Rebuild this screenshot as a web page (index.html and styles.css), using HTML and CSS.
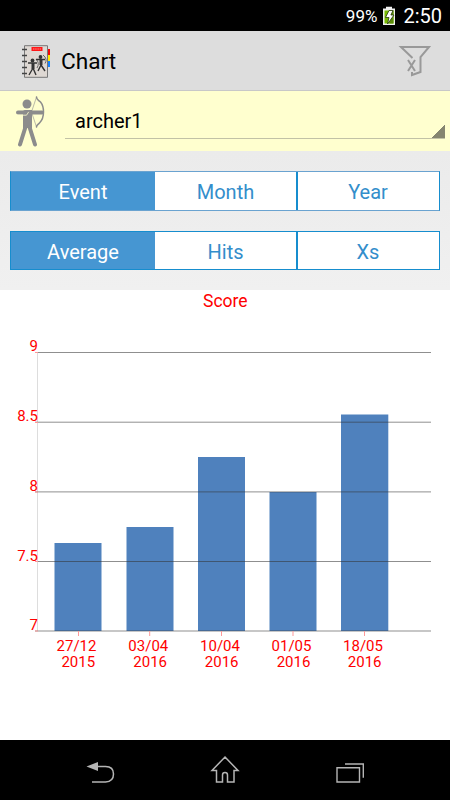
FILE: index.html
```html
<!DOCTYPE html>
<html lang="en">
<head>
<meta charset="utf-8">
<title>Chart</title>
<link rel="stylesheet" href="styles.css">
</head>
<body>
<div class="status">
  <span class="percent">99%</span>
  <svg class="battery" width="14" height="20" viewBox="0 0 14 20"><path d="M1 2.500h3V.7h6v1.800h3V19H1z" fill="#f2f2f2"/><path d="M2.500 4.500h9v13h-9z" fill="#76b900"/><path d="M7.500 4.500h4v13h-4z" fill="#5b8c08"/><path d="M7 4.500h4L8.900 9H12l-6.500 9 1.500-6.500H3.500z" fill="#fff" stroke="#26380a" stroke-width=".8"/></svg>
  <span class="clock">2:50</span>
</div>
<header class="bar">
  <svg class="app-icon" width="30" height="34" viewBox="0 0 30 34">
    <path d="M26 4h3v6h-3z" fill="#f00808"/><path d="M26 10h3v6h-3z" fill="#ffe800"/><path d="M26 16h3v6h-3z" fill="#1683ff"/>
    <path d="M3.500.7h23v31.600h-23z" fill="#ded8d3" stroke="#777" stroke-width="1"/>
    <path d="M10.500 2h11v4h-11z" fill="#ff1717"/><path d="M12 4h8" stroke="#ff8b8b" stroke-width="1" stroke-dasharray="1.500 .7"/>
    <path d="M1 4.500h5M1 10.500h5M1 16.500h5M1 22.500h5M1 28.500h5" stroke="#444" stroke-width="1.500"/>
    <g fill="none" stroke="#333" stroke-width="1.400">
      <path d="M7 18h9M12 18v6M12 23l-4 7M12 23l3 7"/><path d="M15 14q4 4 1 9" stroke-width=".7"/>
      <path d="M15 14.500h9M20 14.500v6M20 20l-3 6M20 20l4 6"/><path d="M22 10q5 4 2 8.500" stroke-width=".7"/>
      <path d="M12 18v6M20 14v6" stroke-width="3"/>
    </g>
    <circle cx="11.500" cy="15.500" r="1.900" fill="#333"/><circle cx="19.500" cy="12" r="1.900" fill="#333"/>
  </svg>
  <h1 class="title">Chart</h1>
  <svg class="filter" width="34" height="32" viewBox="0 0 34 32" fill="none" stroke="#999" stroke-width="2"><path d="M14.500 13L3 2h28L22.500 12v15L14 30v-3"/><path d="M10 15l7 11M17 15l-7 11"/></svg>
</header>
<section class="who">
  <svg class="archer" width="30" height="52" viewBox="0 0 30 52" fill="none" stroke="#8c8c8c" stroke-linecap="round">
    <circle cx="12" cy="9" r="4.500" fill="#8c8c8c" stroke="none"/>
    <path d="M8 17q0-2 2-2h7v18H8z" fill="#8c8c8c" stroke="none"/>
    <path d="M10.500 32L5 49.500M14.500 32L20 49.500" stroke-width="4"/>
    <path d="M3 17.500h8M15 17.500h12" stroke-width="4"/>
    <path d="M1.500 20.200h10l2-3" stroke="#ffffcf" stroke-width=".8"/>
    <path d="M21.500 2c0 3 2 3 4 5 2.500 3 3 7 3 10s-1 8-4 11c-2 2-3 2-3 4" stroke-width="1.500"/>
    <path d="M21.500 2l-5 15 5 15" stroke-width=".6"/>
  </svg>
  <div class="spinner"><span>archer1</span></div>
</section>
<section class="controls">
  <div class="tabs"><div class="tab on">Event</div><div class="tab">Month</div><div class="tab">Year</div></div>
  <div class="tabs second"><div class="tab on">Average</div><div class="tab">Hits</div><div class="tab">Xs</div></div>
</section>
<main class="chart">
  <svg width="450" height="450" viewBox="0 290 450 450">
    <text class="heading" x="225.300" y="307">Score</text>
    <path d="M37.500 352v279" stroke="#ddd"/>
    <g class="bars">
      <rect x="54.500" y="543" width="47" height="88"/><rect x="126.500" y="527" width="47" height="104"/><rect x="198" y="457" width="47" height="174"/><rect x="269.500" y="492" width="47" height="139"/><rect x="341" y="414.500" width="47.300" height="216.500"/>
    </g>
    <g class="grid"><path d="M35 352.500h396"/><path d="M35 422.200h396"/><path d="M35 491.900h396"/><path d="M35 561.500h396"/><path d="M35 631h396"/></g>
    <path d="M35 352.500h3M35 422.500h3M35 492h3M35 561.500h3M35 631h3M78.500 631v5M149.700 631v5M221.500 631v5M293 631v5M364.500 631v5" stroke="#f99"/>
    <g class="yt"><text x="38" y="351">9</text><text x="38" y="421">8.5</text><text x="38" y="490.500">8</text><text x="38" y="560.500">7.5</text><text x="38" y="629.500">7</text></g>
    <g class="xt">
      <text x="76.500" y="651.300">27/12</text><text x="78.300" y="667.300">2015</text>
      <text x="148.300" y="651.300">03/04</text><text x="150.200" y="667.300">2016</text>
      <text x="220" y="651.300">10/04</text><text x="221.700" y="667.300">2016</text>
      <text x="291.500" y="651.300">01/05</text><text x="293.500" y="667.300">2016</text>
      <text x="363" y="651.300">18/05</text><text x="364.700" y="667.300">2016</text>
    </g>
  </svg>
</main>
<nav class="nav">
  <svg width="30" height="30" viewBox="0 0 30 30" fill="none" stroke="#b5b5b5" stroke-width="1.500"><path d="M12 11.500h8.500q8 0 8 7.500t-8 8H7"/><path d="M1.500 11.500L13 7v9z" fill="#b5b5b5" stroke="none"/></svg>
  <svg width="30" height="30" viewBox="0 0 30 30" fill="none" stroke="#b5b5b5" stroke-width="1.500"><path d="M15 2L28 15.500h-4V27h-6.500v-7q0-2.500-2.500-2.500T12.500 20v7H6.500V15.500H2z"/></svg>
  <svg width="30" height="30" viewBox="0 0 30 30" fill="none" stroke="#b5b5b5" stroke-width="1.400"><path d="M2 12.700h22.500V27H2z"/><path d="M10 9h18.300v13.700"/></svg>
</nav>
</body>
</html>
```
FILE: styles.css
```css
* { box-sizing: border-box; }
body { margin: 0; width: 450px; height: 800px; background: #fff; font-family: Roboto, "Liberation Sans", sans-serif; display: flex; flex-direction: column; overflow: hidden; }
svg { display: block; flex: none; }
.status { height: 31px; background: #000; color: #fff; display: flex; align-items: center; justify-content: flex-end; padding: 1px 8px 0 0; }
.percent { font-size: 17px; line-height: 30px; }
.battery { margin: 0 7px 0 5px; }
.clock { font-size: 20px; line-height: 30px; }
.bar { height: 60px; background: #ddd; border-bottom: 1px solid #c8c8c8; display: flex; align-items: center; padding: 3px 18px 0 21px; }
.title { margin: 0 auto 0 10px; font-weight: 400; font-size: 22.700px; line-height: 30px; color: #000; }
.filter { margin-bottom: 2px; }
.who { height: 60px; background: #ffffcf; display: flex; padding: 4px 5px 0 15px; }
.spinner { flex: 1; margin-left: 20px; height: 44px; border-bottom: 1px solid #c2c2a6; background: linear-gradient(135deg, transparent 50%, #858570 50%) right bottom / 15px 15px no-repeat border-box; color: #000; font-size: 20px; line-height: 52px; padding-left: 10px; }
.controls { height: 139px; background: linear-gradient(#ebebeb, #f0f0f0); padding: 20px 10px; }
.tabs { height: 40px; display: grid; grid-template-columns: 144px 141px 143px; grid-template-rows: 100%; border: 1px solid #168dce; border-top-color: #6aa3d0; border-bottom-color: #6aa3d0; background: #fff; }
.second { margin-top: 20px; height: 39px; border-color: #168dce; }
.tab { color: #338ecb; font-size: 20px; line-height: 40px; text-align: center; }
.tab + .tab + .tab { border-left: 2px solid #168dce; padding-right: 1px; }
.tab.on { background: #4696d2; color: #fff; }
.chart { height: 450px; background: #fff; }
.chart text { fill: #f00; font-size: 15px; text-anchor: middle; }
.chart .heading { font-size: 17.500px; }
.chart .yt text { text-anchor: end; font-size: 15px; }
.bars { fill: #4f81bd; }
.grid { fill: none; stroke: #333; stroke-opacity: .55; stroke-width: 1; }
.nav { height: 60px; background: #000; display: flex; justify-content: space-between; align-items: center; padding: 0 85px; }
```
